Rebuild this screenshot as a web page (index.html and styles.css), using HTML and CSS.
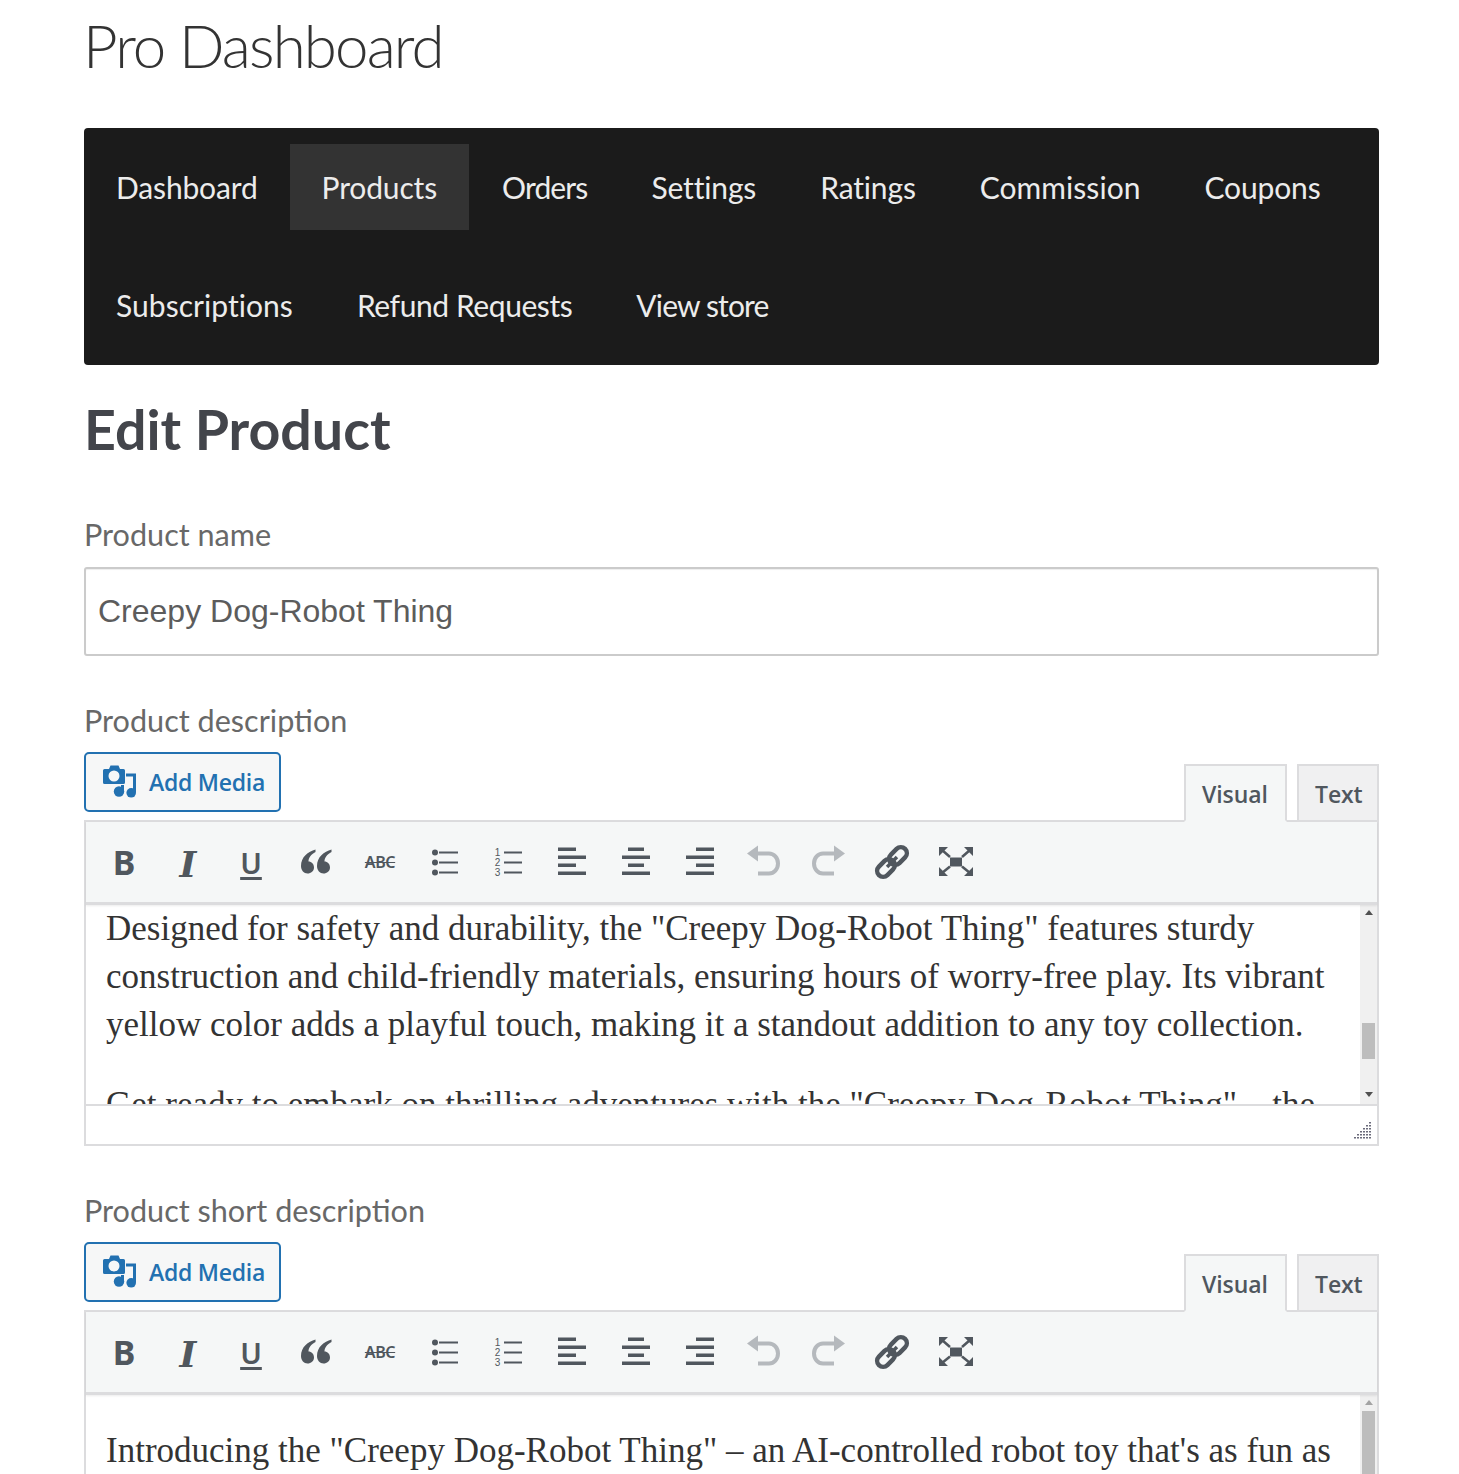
FILE: index.html
```html
<!DOCTYPE html>
<html lang="en">
<head>
<meta charset="utf-8">
<title>Pro Dashboard</title>
<link rel="stylesheet" href="styles.css">
</head>
<body>
<svg class="defs" width="0" height="0" aria-hidden="true">
  <symbol id="i-media" viewBox="0 0 34 34">
    <path d="M1.5 4H6L7.5 0.5H15.5L17 4H20.5Q22 4 22 5.5V17.5Q22 19 20.5 19H1.5Q0 19 0 17.5V5.5Q0 4 1.5 4Z M11 5.5A5.5 5.5 0 1 0 11 16.5A5.5 5.5 0 1 0 11 5.5Z" fill-rule="evenodd"/>
    <circle cx="16" cy="26.5" r="5.2"/>
    <circle cx="28.2" cy="27.8" r="4.8"/>
    <path d="M23 8.5H33V27.5H30V11.5H23Z"/>
    <path d="M18 26.5V20H21V26.5Z"/>
  </symbol>
  <symbol id="i-quote" viewBox="0 0 40 40">
    <path d="M19.5 7.5C12 9.5 5 15 5 24C5 28.5 8 31.5 11.5 31.5C15 31.5 18 29 18 25.5C18 22 15.5 19.5 12.5 19.5C12.5 15.5 15 12.5 19.5 10Z"/>
    <path d="M35.5 7.5C28 9.5 21 15 21 24C21 28.5 24 31.5 27.5 31.5C31 31.5 34 29 34 25.5C34 22 31.5 19.5 28.5 19.5C28.5 15.5 31 12.5 35.5 10Z"/>
  </symbol>
  <symbol id="i-ul" viewBox="0 0 40 40">
    <circle cx="11" cy="10.5" r="3"/><circle cx="11" cy="20.5" r="3"/><circle cx="11" cy="30.5" r="3"/>
    <path d="M15 9.5H34V11.5H15ZM15 19.5H34V21.5H15ZM15 29.5H34V31.5H15Z"/>
  </symbol>
  <symbol id="i-ol" viewBox="0 0 18 40">
    <path d="M0 9.5H18V11.5H0ZM0 19.5H18V21.5H0ZM0 29.5H18V31.5H0Z"/>
  </symbol>
  <symbol id="i-left" viewBox="0 0 40 40"><path d="M6 5.5H24V9H6ZM6 13.5H34V17H6ZM6 21.5H24V25H6ZM6 29.5H34V33H6Z"/></symbol>
  <symbol id="i-center" viewBox="0 0 40 40"><path d="M12 5.5H28V9H12ZM6 13.5H34V17H6ZM12 21.5H28V25H12ZM6 29.5H34V33H6Z"/></symbol>
  <symbol id="i-right" viewBox="0 0 40 40"><path d="M16 5.5H34V9H16ZM6 13.5H34V17H6ZM16 21.5H34V25H16ZM6 29.5H34V33H6Z"/></symbol>
  <symbol id="i-undo" viewBox="0 0 40 40">
    <path d="M3 11.5L14 3.5V19.5Z"/>
    <path d="M13 11.5H25A9 10 0 0 1 25 31.5H14" fill="none" stroke="currentColor" stroke-width="4"/>
  </symbol>
  <symbol id="i-redo" viewBox="0 0 40 40">
    <path d="M37 11.5L26 3.5V19.5Z"/>
    <path d="M27 11.5H15A9 10 0 0 0 15 31.5H26" fill="none" stroke="currentColor" stroke-width="4"/>
  </symbol>
  <symbol id="i-link" viewBox="0 0 40 40">
    <g transform="rotate(-45 20 20)" fill="none" stroke="currentColor" stroke-width="4.5">
      <rect x="1.5" y="14" width="20" height="12" rx="6"/>
      <rect x="18.5" y="14" width="20" height="12" rx="6"/>
      <path d="M13 20H27" stroke-width="3.5"/>
    </g>
  </symbol>
  <symbol id="i-full" viewBox="0 0 40 40">
    <path d="M14 15.5H26V24.5H14Z"/>
    <path d="M3 5H12L3 14ZM37 5H28L37 14ZM3 34H12L3 25ZM37 34H28L37 25Z"/>
    <path d="M6 8L14 15M34 8L26 15M6 31L14 24.5M34 31L26 24.5" fill="none" stroke="currentColor" stroke-width="2.5"/>
  </symbol>
</svg>

<div class="page">
  <header class="site-head"><div class="site-title">Pro Dashboard</div></header>
  <nav class="dash-nav">
    <a class="nav-item" href="#">Dashboard</a>
    <a class="nav-item is-active" href="#">Products</a>
    <a class="nav-item nav-tight" href="#">Orders</a>
    <a class="nav-item" href="#">Settings</a>
    <a class="nav-item" href="#">Ratings</a>
    <a class="nav-item nav-loose" href="#">Commission</a>
    <a class="nav-item" href="#">Coupons</a>
    <a class="nav-item nav-loose" href="#">Subscriptions</a>
    <a class="nav-item nav-snug" href="#">Refund Requests</a>
    <a class="nav-item nav-tight" href="#">View store</a>
  </nav>

  <h1 class="page-title">Edit Product</h1>

  <label class="field-label name-label" for="pname">Product name</label>
  <input class="text-input" id="pname" type="text" value="Creepy Dog-Robot Thing">

  <div class="field-label desc-label">Product description</div>
  <section class="editor">
    <div class="editor-top">
      <button class="add-media" type="button"><svg class="media-icon"><use href="#i-media"/></svg><span>Add Media</span></button>
      <div class="tabs"><span class="tab is-on">Visual</span><span class="tab">Text</span></div>
    </div>
    <div class="editor-box">
      <div class="toolbar">
        <span class="tool t-b">B</span>
        <span class="tool t-i">I</span>
        <span class="tool t-u">U</span>
        <span class="tool"><svg class="ico"><use href="#i-quote"/></svg></span>
        <span class="tool t-abc">ABC</span>
        <span class="tool"><svg class="ico"><use href="#i-ul"/></svg></span>
        <span class="tool t-ol"><span class="ol-nums">1<br>2<br>3</span><svg class="ico-lines"><use href="#i-ol"/></svg></span>
        <span class="tool"><svg class="ico"><use href="#i-left"/></svg></span>
        <span class="tool"><svg class="ico"><use href="#i-center"/></svg></span>
        <span class="tool"><svg class="ico"><use href="#i-right"/></svg></span>
        <span class="tool is-off"><svg class="ico"><use href="#i-undo"/></svg></span>
        <span class="tool is-off"><svg class="ico"><use href="#i-redo"/></svg></span>
        <span class="tool"><svg class="ico"><use href="#i-link"/></svg></span>
        <span class="tool"><svg class="ico"><use href="#i-full"/></svg></span>
      </div>
      <div class="edit-area">
        <div class="edit-text">
          <p>Designed for safety and durability, the "Creepy Dog-Robot Thing" features sturdy construction and child-friendly materials, ensuring hours of worry-free play. Its vibrant yellow color adds a playful touch, making it a standout addition to any toy collection.</p>
          <p>Get ready to embark on thrilling adventures with the "Creepy Dog-Robot Thing" – the</p>
        </div>
        <div class="scrollbar">
          <span class="arrow up"></span>
          <span class="track"><span class="thumb thumb-low"></span></span>
          <span class="arrow down"></span>
        </div>
      </div>
      <div class="status"><svg class="grip" viewBox="0 0 18 18"><path d="M16 1h2v1.5h-2zM13 4h2v1.5h-2zM16 4h2v1.5h-2zM10 7h2v1.5h-2zM13 7h2v1.5h-2zM16 7h2v1.5h-2zM7 10h2v1.5H7zM10 10h2v1.5h-2zM13 10h2v1.5h-2zM16 10h2v1.5h-2zM4 13h2v1.5H4zM7 13h2v1.5H7zM10 13h2v1.5h-2zM13 13h2v1.5h-2zM16 13h2v1.5h-2zM1 16h2v1.5H1zM4 16h2v1.5H4zM7 16h2v1.5H7zM10 16h2v1.5h-2zM13 16h2v1.5h-2zM16 16h2v1.5h-2z"/></svg></div>
    </div>
  </section>

  <div class="field-label short-label">Product short description</div>
  <section class="editor">
    <div class="editor-top">
      <button class="add-media" type="button"><svg class="media-icon"><use href="#i-media"/></svg><span>Add Media</span></button>
      <div class="tabs"><span class="tab is-on">Visual</span><span class="tab">Text</span></div>
    </div>
    <div class="editor-box">
      <div class="toolbar">
        <span class="tool t-b">B</span>
        <span class="tool t-i">I</span>
        <span class="tool t-u">U</span>
        <span class="tool"><svg class="ico"><use href="#i-quote"/></svg></span>
        <span class="tool t-abc">ABC</span>
        <span class="tool"><svg class="ico"><use href="#i-ul"/></svg></span>
        <span class="tool t-ol"><span class="ol-nums">1<br>2<br>3</span><svg class="ico-lines"><use href="#i-ol"/></svg></span>
        <span class="tool"><svg class="ico"><use href="#i-left"/></svg></span>
        <span class="tool"><svg class="ico"><use href="#i-center"/></svg></span>
        <span class="tool"><svg class="ico"><use href="#i-right"/></svg></span>
        <span class="tool is-off"><svg class="ico"><use href="#i-undo"/></svg></span>
        <span class="tool is-off"><svg class="ico"><use href="#i-redo"/></svg></span>
        <span class="tool"><svg class="ico"><use href="#i-link"/></svg></span>
        <span class="tool"><svg class="ico"><use href="#i-full"/></svg></span>
      </div>
      <div class="edit-area edit-short">
        <div class="edit-text">
          <p>Introducing the "Creepy Dog-Robot Thing" – an AI-controlled robot toy that's as fun as</p>
        </div>
        <div class="scrollbar">
          <span class="arrow up is-dim"></span>
          <span class="track"><span class="thumb thumb-top"></span></span>
        </div>
      </div>
    </div>
  </section>
</div>
</body>
</html>
```
FILE: styles.css
```css
* { box-sizing: border-box; }
html, body { margin: 0; padding: 0; height: 1474px; overflow: hidden; background: #fff; }
body { font-family: "Lato", "Noto Sans", sans-serif; color: #43454b; }
.defs { position: absolute; }
.page { width: 1295px; margin-left: 84px; }

.site-head { height: 128px; }
.site-title { font-size: 60px; line-height: 90px; font-weight: 300; color: #333; letter-spacing: -1.85px; margin-left: -1px; }

.dash-nav { background: #1b1b1b; border-radius: 4px; height: 237px; padding: 16px 0 0; display: flex; flex-wrap: wrap; align-content: flex-start; row-gap: 32px; }
.nav-item { height: 86px; padding: 0 32px; display: flex; align-items: center; font-size: 30px; font-weight: 400; color: #ececec; text-decoration: none; letter-spacing: -0.15px; }
.nav-item.is-active { background: #333; margin-right: 1px; }
.nav-tight { letter-spacing: -0.85px; }
.nav-snug { letter-spacing: -0.42px; }
.nav-loose { letter-spacing: 0.05px; }

.page-title { margin: 0; height: 150px; padding-top: 29px; font-size: 55.5px; line-height: 70px; font-weight: 700; color: #43454b; }

.field-label { display: block; font-size: 30.6px; line-height: 40px; color: #686868; }
.name-label { height: 52px; }
.text-input { display: block; width: 100%; height: 89px; border: 2px solid #cbcbcb; border-radius: 3px; padding: 0 12px; font-family: "Liberation Sans", sans-serif; font-size: 32px; color: #5c5c5c; background: #fff; outline: 0; box-shadow: inset 0 1px 1px #eee; }
.desc-label { margin-top: 45px; height: 51px; }
.short-label { margin-top: 45px; height: 51px; }

.editor-top { display: flex; justify-content: space-between; align-items: flex-start; height: 68px; }
.add-media { height: 60px; width: 197px; display: flex; align-items: center; gap: 12px; padding: 0 0 0 17px; background: #f6f7f7; border: 2px solid #2271b1; border-radius: 5px; color: #2271b1; font-family: "Open Sans", sans-serif; font-size: 23px; letter-spacing: -0.25px; font-weight: 600; white-space: nowrap; }
.media-icon { width: 34px; height: 34px; fill: #2271b1; flex: none; }

.tabs { display: flex; gap: 10px; margin-top: 12px; }
.tab { height: 58px; padding: 2px 16px 0; display: flex; align-items: center; border: 2px solid #dcdcde; background: #f0f0f1; font-family: "Open Sans", sans-serif; font-size: 23px; letter-spacing: -0.1px; font-weight: 600; color: #50575e; position: relative; z-index: 1; }
.tab.is-on { width: 103px; background: #f5f7f7; border-bottom-color: #f5f7f7; }
.tab:not(.is-on) { width: 82px; border-bottom-color: #dcdcde; }

.editor-box { border: 2px solid #dcdcde; background: #fff; }
.toolbar { height: 83px; background: #f5f7f7; display: flex; align-items: center; padding-left: 6px; border-bottom: 3px solid #dcdcde; box-shadow: 0 1px 2px rgba(0,0,0,.08); position: relative; }
.tool { width: 64px; height: 40px; flex: none; display: flex; align-items: center; justify-content: center; color: #50575e; font-family: "Noto Sans", sans-serif; }
.tool.is-off { color: #b5b9bd; }
.ico { width: 40px; height: 40px; fill: currentColor; display: block; }
.ico-lines { width: 18px; height: 40px; fill: currentColor; display: block; }
.t-ol { gap: 3px; }
.ol-nums { font-family: "Liberation Sans", sans-serif; font-size: 10px; line-height: 10px; width: 7px; text-align: center; margin-top: 1px; }
.t-b { font-size: 34px; font-weight: 700; }
.t-i { font-family: "DejaVu Serif", serif; font-size: 36px; font-weight: 700; font-style: italic; padding-top: 3px; }
.t-u { font-size: 29px; font-weight: 600; text-decoration: underline; text-decoration-thickness: 3px; text-underline-offset: 3px; padding-right: 2px; }
.t-abc { font-size: 16px; font-weight: 600; letter-spacing: -0.4px; text-decoration: line-through; }

.edit-area { height: 199px; display: flex; overflow: hidden; background: #fff; }
.edit-text { flex: 1; min-width: 0; padding: 0 20px; font-family: "Liberation Serif", serif; font-size: 35px; line-height: 48px; color: #333; overflow: hidden; }
.edit-text p { margin: 0 0 32px; }
.edit-short { height: 90px; }
.edit-short .edit-text { padding-top: 32px; }

.scrollbar { width: 17px; flex: none; background: #f0f0f0; display: flex; flex-direction: column; align-items: center; }
.arrow { width: 0; height: 0; border-left: 4px solid transparent; border-right: 4px solid transparent; flex: none; }
.arrow.up { border-bottom: 5px solid #505050; margin: 5px 0 5px; }
.arrow.up.is-dim { border-bottom-color: #a3a3a3; }
.arrow.down { border-top: 5px solid #505050; margin: 3px 0 7px; }
.track { flex: 1; width: 100%; padding: 0 2px; display: block; min-height: 0; }
.thumb { display: block; background: #bdbdbd; }
.thumb-low { height: 36px; margin-top: 103px; }
.thumb-top { height: 70px; margin-top: 1px; }

.status { height: 40px; display: flex; justify-content: flex-end; align-items: flex-end; border-top: 2px solid #dcdcde; padding: 0 6px 5px 0; }
.grip { width: 18px; height: 18px; fill: #6b6b7b; }
```
